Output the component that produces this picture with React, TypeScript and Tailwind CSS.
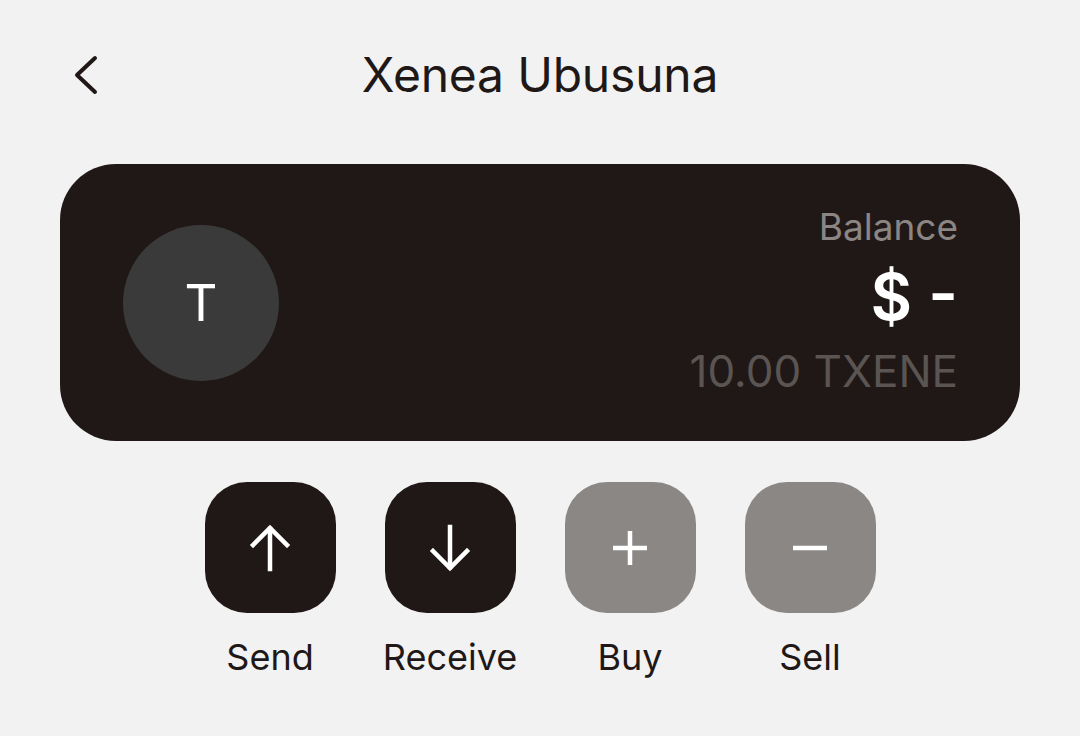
import React from 'react';

const font = { fontFamily: 'Inter, "Noto Sans", sans-serif' };

function ArrowUp() {
  return (
    <svg width="46" height="48" viewBox="0 0 46 48" fill="none" stroke="white" strokeWidth="4.5" strokeLinecap="square">
      <path d="M23 45V5" />
      <path d="M6 21L23 4L40 21" />
    </svg>
  );
}

function ArrowDown() {
  return (
    <svg width="46" height="48" viewBox="0 0 46 48" fill="none" stroke="white" strokeWidth="4.5" strokeLinecap="square">
      <path d="M23 3V43" />
      <path d="M6 27L23 44L40 27" />
    </svg>
  );
}

function Plus() {
  return (
    <svg width="40" height="40" viewBox="0 0 40 40" fill="none" stroke="white" strokeWidth="4.5">
      <path d="M20 3V37" />
      <path d="M3 20H37" />
    </svg>
  );
}

function Minus() {
  return (
    <svg width="40" height="40" viewBox="0 0 40 40" fill="none" stroke="white" strokeWidth="4.5">
      <path d="M3 20H37" />
    </svg>
  );
}

const actions = [
  { label: 'Send', icon: <ArrowUp />, dark: true },
  { label: 'Receive', icon: <ArrowDown />, dark: true },
  { label: 'Buy', icon: <Plus />, dark: false },
  { label: 'Sell', icon: <Minus />, dark: false },
];

export default function App() {
  return (
    <div className="w-[1080px] h-[736px] bg-[#f2f2f2] text-[#201816] flex flex-col" style={font}>
      {/* header */}
      <div className="relative h-[150px] flex items-start justify-center pt-[47px]">
        <svg className="absolute left-[71px] top-[55px]" width="28" height="40" viewBox="0 0 28 40" fill="none" stroke="#201816" strokeWidth="4" strokeLinecap="round" strokeLinejoin="round">
          <path d="M24 3L6 20L24 37" />
        </svg>
        <h1 className="text-[48px] leading-[56px] font-normal tracking-[-0.2px]">Xenea Ubusuna</h1>
      </div>

      {/* balance card */}
      <div className="mx-[60px] mt-[14px] h-[277px] rounded-[56px] bg-[#201816] flex items-center justify-between pl-[63px] pr-[62px]">
        <div className="w-[156px] h-[156px] rounded-full bg-[#3a3a3a] flex items-center justify-center">
          <span className="text-white text-[51px] font-normal leading-none">T</span>
        </div>
        <div className="flex flex-col items-end">
          <span className="text-[#8b8684] text-[37px] leading-[44px]">Balance</span>
          <span className="text-white text-[64px] font-semibold leading-[70px] mt-[13px]">$ -</span>
          <span className="text-[#5a5552] text-[44px] leading-[50px] mt-[14px] mb-[5px]">10.00 TXENE</span>
        </div>
      </div>

      {/* actions */}
      <div className="flex justify-center gap-[49px] mt-[41px]">
        {actions.map((a) => (
          <div key={a.label} className="w-[131px] flex flex-col items-center">
            <div
              className={
                'w-[131px] h-[131px] rounded-[42px] flex items-center justify-center ' +
                (a.dark ? 'bg-[#201816]' : 'bg-[#8a8785]')
              }
            >
              {a.icon}
            </div>
            <span className="mt-[22px] text-[36px] leading-[44px] whitespace-nowrap">{a.label}</span>
          </div>
        ))}
      </div>
    </div>
  );
}
